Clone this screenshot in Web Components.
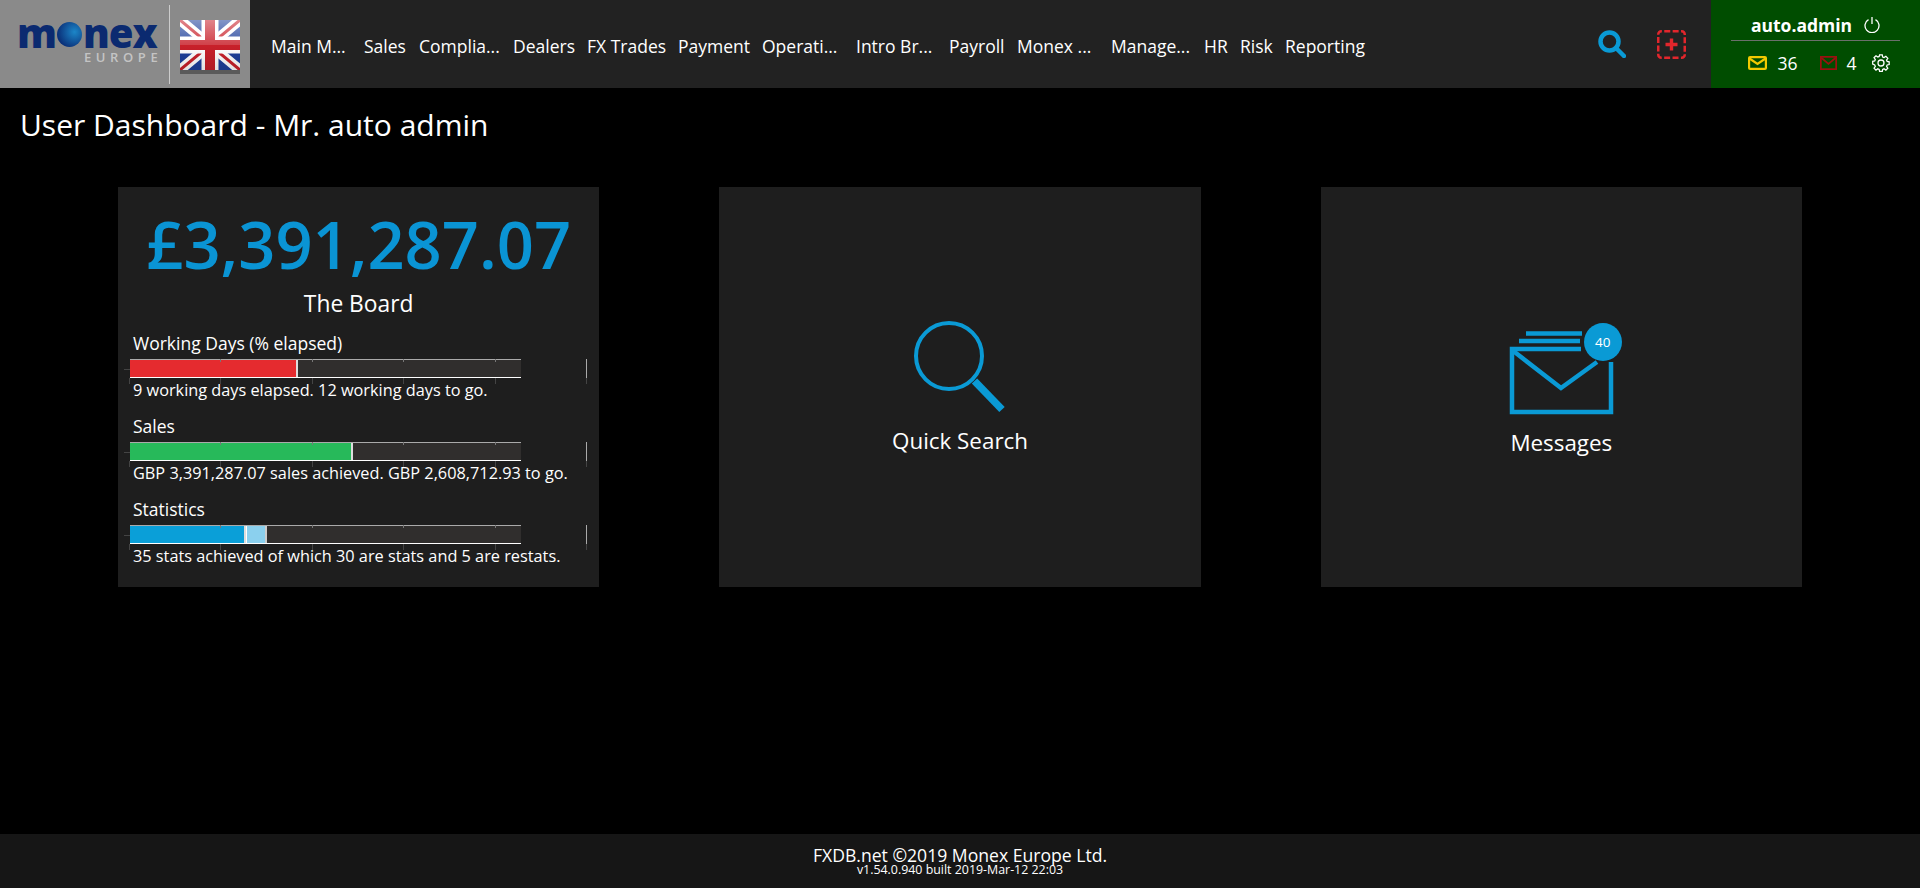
<!DOCTYPE html>
<html>
<head>
<meta charset="utf-8">
<title>FXDB.net</title>
<style>
  html, body { margin: 0; height: 100%; background: #000; }
  body {
    display: flex;
    flex-direction: column;
    height: 888px;
    overflow: hidden;
    font-family: "Open Sans", "Liberation Sans", sans-serif;
    color: #fff;
  }
</style>
</head>
<body>
<top-bar>
  <nav-link style="--w:75px;--gap:18px">Main M...</nav-link>
  <nav-link style="--w:42px;--gap:13px">Sales</nav-link>
  <nav-link style="--w:81px;--gap:13px">Complia...</nav-link>
  <nav-link style="--w:61px;--gap:13px">Dealers</nav-link>
  <nav-link style="--w:79px;--gap:12px">FX Trades</nav-link>
  <nav-link style="--w:72px;--gap:12px">Payment</nav-link>
  <nav-link style="--w:77px;--gap:17px">Operati...</nav-link>
  <nav-link style="--w:76px;--gap:17px">Intro Br...</nav-link>
  <nav-link style="--w:55px;--gap:13px">Payroll</nav-link>
  <nav-link style="--w:77px;--gap:17px">Monex ...</nav-link>
  <nav-link style="--w:76px;--gap:17px">Manage...</nav-link>
  <nav-link style="--w:24px;--gap:12px">HR</nav-link>
  <nav-link style="--w:33px;--gap:12px">Risk</nav-link>
  <nav-link style="--w:80px;--gap:0">Reporting</nav-link>
</top-bar>
<page-title>User Dashboard - Mr. auto admin</page-title>
<dash-grid>
  <dash-card>
    <board-panel amount="£3,391,287.07" name="The Board">
      <bullet-bar label="Working Days (% elapsed)" fill="#e52b2f" value="168" note="9 working days elapsed. 12 working days to go."></bullet-bar>
      <bullet-bar label="Sales" fill="#27b95a" value="223" note="GBP 3,391,287.07 sales achieved. GBP 2,608,712.93 to go."></bullet-bar>
      <bullet-bar label="Statistics" fill="#0a9fd8" value="116" extra="21" note="35 stats achieved of which 30 are stats and 5 are restats."></bullet-bar>
    </board-panel>
  </dash-card>
  <dash-card>
    <tile-link label="Quick Search">
      <svg width="96" height="96" viewBox="0 -2 96 96" fill="none" stroke="#0a9ad5">
        <circle cx="37" cy="36" r="33" stroke-width="4"/>
        <path d="M62.5 61 L90 89.5" stroke-width="7.5"/>
      </svg>
    </tile-link>
  </dash-card>
  <dash-card>
    <tile-link label="Messages">
      <message-icon count="40"></message-icon>
    </tile-link>
  </dash-card>
</dash-grid>
<page-footer></page-footer>

<script>
const topBarTemplate = document.createElement("template");
topBarTemplate.innerHTML = `
  <style>
    :host { display: flex; height: 88px; background: #222; flex: none; }
    .brand { width: 250px; background: #8a8a8a; display: flex; align-items: center; flex: none; position: relative; }
    .logo { width: 169px; height: 88px; box-sizing: border-box; padding: 19px 0 0 17px; flex: none; }
    .word { font: 800 40px/28px "Open Sans", sans-serif; letter-spacing: -1px; color: #0b2a70; display: flex; align-items: center; height: 28px; }
    .dot { width: 25px; height: 25px; border-radius: 50%; margin: 3px 1px 0 1px; background: radial-gradient(circle at 70% 40%, #1c86c8, #0a2f78 75%); }
    .sub { font: 600 13px/14px "Open Sans", sans-serif; letter-spacing: 4.6px; color: #c4c4c4; padding: 3px 0 0 67px; white-space: nowrap; }
    .rule { width: 1px; height: 79px; background: #ccc; flex: none; }
    .flag { margin: 8px 0 0 10px; flex: none; display: block; }
    nav { display: flex; align-items: center; padding: 4px 0 0 21px; flex: 1; }
    .tools { display: flex; align-items: center; gap: 31px; padding: 0 25px 0 0; }
    .tools svg { display: block; }
    .user { width: 209px; background: #004d00; flex: none; box-sizing: border-box; padding: 0 20px; text-align: center; font-size: 17.5px; }
    .who { height: 41px; border-bottom: 1px solid #6a6f6a; display: flex; align-items: center; justify-content: center; gap: 12px; font-weight: 700; line-height: 24px; padding-top: 9px; box-sizing: border-box; }
    .stats { display: flex; align-items: center; justify-content: center; height: 44px; padding: 0 0 0 7px; box-sizing: border-box; }
    .stats svg { display: block; flex: none; }
  </style>
  <div class="brand">
    <div class="logo">
      <div class="word"><span>m</span><span class="dot"></span><span>nex</span></div>
      <div class="sub">EUROPE</div>
    </div>
    <div class="rule"></div>
    <svg class="flag" width="60" height="56" viewBox="0 0 60 56">
      <defs>
        <linearGradient id="sheen" x1="0" y1="0" x2="0" y2="1">
          <stop offset="0" stop-color="#fff" stop-opacity=".45"/>
          <stop offset=".5" stop-color="#fff" stop-opacity=".15"/>
          <stop offset=".5" stop-color="#000" stop-opacity="0"/>
          <stop offset="1" stop-color="#000" stop-opacity=".12"/>
        </linearGradient>
        <clipPath id="fc"><rect width="60" height="50"/></clipPath>
      </defs>
      <rect y="50" width="60" height="4" fill="#5a5a5a"/>
      <g clip-path="url(#fc)">
        <rect width="60" height="50" fill="#1d3f9a"/>
        <path d="M0 0L60 50M60 0L0 50" stroke="#fff" stroke-width="10"/>
        <path d="M0 0L60 50M60 0L0 50" stroke="#c8202a" stroke-width="3"/>
        <path d="M30 0V50M0 25H60" stroke="#fff" stroke-width="17"/>
        <path d="M30 0V50M0 25H60" stroke="#c8202a" stroke-width="10"/>
        <rect width="60" height="50" fill="url(#sheen)"/>
      </g>
    </svg>
  </div>
  <nav><slot></slot></nav>
  <div class="tools">
    <svg width="28" height="28" viewBox="0 0 28 28" fill="none" stroke="#0a9ad5">
      <circle cx="11.5" cy="11.5" r="9" stroke-width="4.5"/>
      <path d="M18 18 L26 26" stroke-width="4.5" stroke-linecap="round"/>
    </svg>
    <svg width="29" height="29" viewBox="0 0 29 29" fill="none" stroke="#e2262c">
      <rect x="1.25" y="1.25" width="26.5" height="26.5" rx="3" stroke-width="2.5" stroke-dasharray="6 2.4" stroke-dashoffset="5.4"/>
      <path d="M14.5 8.5V20.5M8.5 14.5H20.5" stroke-width="3.4"/>
    </svg>
  </div>
  <div class="user">
    <div class="who">
      <span>auto.admin</span>
      <svg width="16" height="17" viewBox="0 0 16 17" fill="none" stroke="#fff" stroke-width="1.3">
        <path d="M4.5 3.6A7 7 0 1 0 11.5 3.6"/><path d="M8 1V8"/>
      </svg>
    </div>
    <div class="stats">
      <svg width="19" height="14" viewBox="0 0 19 14" fill="none" stroke="#f2c900" stroke-width="2.2">
        <rect x="1.1" y="1.1" width="16.8" height="11.8" rx="1"/><path d="M1.5 2.5L9.5 8L17.5 2.5"/>
      </svg>
      <span style="margin:0 22px 0 10px">36</span>
      <svg width="17" height="14" viewBox="0 0 17 14" fill="none" stroke="#9c1010" stroke-width="1.7">
        <rect x=".85" y=".85" width="15.3" height="12.3"/><path d="M1 1.5L8.5 8L16 1.5"/>
      </svg>
      <span style="margin:0 15px 0 10px">4</span>
      <svg width="18" height="18" viewBox="0 0 18 18" fill="none" stroke="#fff" stroke-width="1.3">
        <circle cx="9" cy="9" r="3"/>
        <path d="M7.6 1h2.8l.4 2.2 1.4.6 1.9-1.3 2 2-1.3 1.9.6 1.4 2.1.4v2.8l-2.1.4-.6 1.4 1.3 1.9-2 2-1.9-1.3-1.4.6-.4 2.1H7.6l-.4-2.1-1.4-.6-1.9 1.3-2-2 1.3-1.9-.6-1.4L.5 10.4V7.6l2.1-.4.6-1.4-1.3-1.9 2-2 1.9 1.3 1.4-.6z" transform="translate(.2 -.1) scale(.97)"/>
      </svg>
    </div>
  </div>
`;

class TopBar extends HTMLElement {
  constructor() {
    super();
    this.attachShadow({ mode: 'open' });
    this.shadowRoot.appendChild(topBarTemplate.content.cloneNode(true));
  }
}

class NavLink extends HTMLElement {
  constructor() {
    super();
    this.attachShadow({ mode: 'open' }).innerHTML = `
      <style>
        :host { display: block; width: var(--w); margin-right: var(--gap); font-size: 17.5px; line-height: 24px; white-space: nowrap; flex: none; cursor: pointer; }
      </style>
      <slot></slot>`;
  }
}

class PageTitle extends HTMLElement {
  constructor() {
    super();
    this.attachShadow({ mode: 'open' }).innerHTML = `
      <style>
        :host { display: block; flex: none; height: 99px; box-sizing: border-box; padding: 18px 0 0 20px; font-size: 30px; line-height: 38px; }
      </style>
      <slot></slot>`;
  }
}

class DashGrid extends HTMLElement {
  constructor() {
    super();
    this.attachShadow({ mode: 'open' }).innerHTML = `
      <style>
        :host { display: grid; grid-template-columns: repeat(3, 1fr); column-gap: 120px; padding: 0 118px; grid-auto-rows: 400px; flex: none; }
      </style>
      <slot></slot>`;
  }
}

class DashCard extends HTMLElement {
  constructor() {
    super();
    this.attachShadow({ mode: 'open' }).innerHTML = `
      <style>
        :host { display: flex; flex-direction: column; background: #1e1e1e; min-width: 0; }
      </style>
      <slot></slot>`;
  }
}

class BoardPanel extends HTMLElement {
  constructor() {
    super();
    this.attachShadow({ mode: 'open' }).innerHTML = `
      <style>
        :host { display: block; padding: 14px 0 0 12px; }
        .amount { font-size: 65px; font-weight: 600; line-height: 87px; color: #0a94d4; text-align: center; padding-right: 12px; white-space: nowrap; }
        .name { font-size: 22.8px; line-height: 32px; text-align: center; padding: 0 12px 13px 0; }
        .bars { display: flex; flex-direction: column; gap: 12px; }
      </style>
      <div class="amount">${this.getAttribute('amount')}</div>
      <div class="name">${this.getAttribute('name')}</div>
      <div class="bars"><slot></slot></div>`;
  }
}

class BulletBar extends HTMLElement {
  constructor() {
    super();
    const value = this.getAttribute('value');
    const extra = this.getAttribute('extra');
    this.attachShadow({ mode: 'open' }).innerHTML = `
      <style>
        :host { display: block; font-size: 17.5px; line-height: 20px; white-space: nowrap; }
        .label, .note { padding-left: 3px; }
        .label { height: 26px; }
        .note { font-size: 16.3px; height: 26px; line-height: 24px; }
        .chart { position: relative; width: 457px; height: 19px; }
        .track { width: 391px; height: 19px; box-sizing: border-box; background: #302e2d; border-top: 1px solid #aaa; border-bottom: 1px solid #fff; display: flex; }
        .fill { height: 100%; box-sizing: border-box; border-right: 2px solid #ddd; }
        .extra { height: 100%; box-sizing: border-box; background: #8bd0ee; border-left: 1px solid #fff; border-right: 2px solid #ccc; }
        .tick { position: absolute; width: 1px; height: 6px; background: #444; top: 19px; }
        .tick.top { height: 3px; top: 0; background: #777; }
        .end { position: absolute; right: 0; top: 0; width: 1px; height: 19px; background: #aaa; }
        .lead { position: absolute; left: -6px; top: 10px; width: 6px; height: 1px; background: #444; }
      </style>
      <div class="label">${this.getAttribute('label')}</div>
      <div class="chart">
        <div class="track">
          <div class="fill" style="width:${value}px;background:${this.getAttribute('fill')}"></div>
          ${extra ? `<div class="extra" style="width:${extra}px"></div>` : ''}
        </div>
        ${[-1, 90, 182, 273, 365, 456].map(x => `<div class="tick" style="left:${x}px"></div>`).join('')}
        ${[90, 182, 273, 365].map(x => `<div class="tick top" style="left:${x}px"></div>`).join('')}
        <div class="end"></div>
        <div class="lead"></div>
      </div>
      <div class="note">${this.getAttribute('note')}</div>`;
  }
}

class TileLink extends HTMLElement {
  constructor() {
    super();
    this.attachShadow({ mode: 'open' }).innerHTML = `
      <style>
        :host { display: flex; flex: 1; flex-direction: column; align-items: center; justify-content: center; cursor: pointer; }
        .label { font-size: 22.4px; line-height: 30px; padding-top: 12px; }
        .icon { display: flex; line-height: 0; }
      </style>
      <div class="icon"><slot></slot></div>
      <div class="label">${this.getAttribute('label')}</div>`;
  }
}

class MessageIcon extends HTMLElement {
  constructor() {
    super();
    this.attachShadow({ mode: 'open' }).innerHTML = `
      <style>
        :host { display: block; position: relative; width: 113px; height: 100px; }
        svg { display: block; position: absolute; left: 0; top: 4px; }
        .badge { position: absolute; left: 79px; top: 7px; width: 38px; height: 38px; border-radius: 50%; background: #0a9ad5; color: #fff; font-size: 13.5px; line-height: 38px; text-align: center; }
      </style>
      <svg width="120" height="96" viewBox="0 0 120 96" fill="none" stroke="#0a9ad5" stroke-width="4.5">
        <path d="M21 13.5H77M14 21H75M76 29H7V92H106V42"/>
        <path d="M7 30L56 68L92 42"/>
      </svg>
      <div class="badge">${this.getAttribute('count')}</div>`;
  }
}

class PageFooter extends HTMLElement {
  constructor() {
    super();
    this.attachShadow({ mode: 'open' }).innerHTML = `
      <style>
        :host { display: block; margin-top: auto; height: 54px; flex: none; background: #161616; text-align: center; box-sizing: border-box; padding-top: 12px; white-space: nowrap; }
        .main { font-size: 17.6px; line-height: 18px; }
        .ver { font-size: 12.4px; line-height: 11px; }
      </style>
      <div class="main">FXDB.net ©2019 Monex Europe Ltd.</div>
      <div class="ver">v1.54.0.940 built 2019-Mar-12 22:03</div>`;
  }
}

customElements.define('top-bar', TopBar);
customElements.define('nav-link', NavLink);
customElements.define('page-title', PageTitle);
customElements.define('dash-grid', DashGrid);
customElements.define('dash-card', DashCard);
customElements.define('board-panel', BoardPanel);
customElements.define('bullet-bar', BulletBar);
customElements.define('tile-link', TileLink);
customElements.define('message-icon', MessageIcon);
customElements.define('page-footer', PageFooter);
</script>
</body>
</html>
